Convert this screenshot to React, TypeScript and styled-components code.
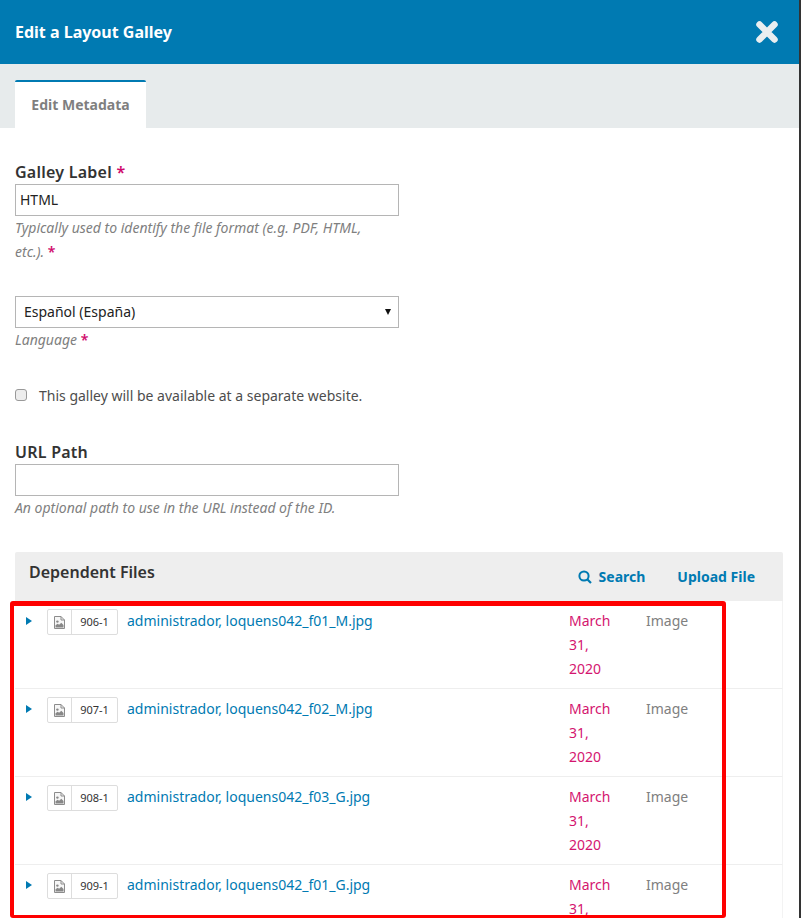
import React from "react";
import styled, { createGlobalStyle } from "styled-components";

const Global = createGlobalStyle`
  html, body { margin: 0; padding: 0; background: #fff; }
  body { width: 801px; height: 918px; overflow: hidden; font-family: "Noto Sans", "Open Sans", sans-serif; }
  * { box-sizing: border-box; }
`;

const Page = styled.div`
  position: relative;
  width: 801px;
  height: 918px;
  overflow: hidden;
  background: #fff;
  display: flex;
`;
const Modal = styled.div`
  width: 799px;
  height: 918px;
  overflow: hidden;
`;
const EdgeBar = styled.div`
  width: 2px;
  height: 918px;
  background: #333;
`;
const Header = styled.header`
  height: 64px;
  background: #007ab2;
  display: flex;
  align-items: center;
  justify-content: space-between;
  padding: 0 20px 0 15px;
`;
const Title = styled.h1`
  margin: 0;
  font-size: 16px;
  font-weight: 700;
  color: #fff;
`;
const TabBar = styled.div`
  height: 64px;
  background: #e7ebec;
  padding: 16px 0 0 15px;
`;
const Tab = styled.div`
  width: 131px;
  height: 48px;
  background: #fff;
  border-top: 2px solid #007ab2;
  border-radius: 2px 2px 0 0;
  font-size: 14px;
  font-weight: 700;
  color: #7f7f7f;
  display: flex;
  align-items: center;
  justify-content: center;
  padding-bottom: 2px;
`;
const Form = styled.div`
  padding: 32px 15px 0;
  display: flex;
  flex-direction: column;
`;
const Label = styled.div`
  font-size: 16px;
  line-height: 24px;
  font-weight: 600;
  color: #333;
  letter-spacing: 0.25px;
`;
const Star = styled.span`
  color: #d00a6c;
  font-style: normal;
  font-weight: 600;
`;
const NoWrap = styled.span`
  white-space: nowrap;
`;
const TextBox = styled.div`
  width: 384px;
  height: 32px;
  border: 1px solid #b5b5b5;
  font-size: 14px;
  line-height: 30px;
  padding: 0 4px;
  color: #222;
`;
const SelectBox = styled(TextBox)`
  display: flex;
  justify-content: space-between;
  align-items: center;
  padding: 0 8px;
`;
const Caret = styled.span`
  width: 0;
  height: 0;
  margin-right: -1px;
  margin-top: -1px;
  border-left: 3px solid transparent;
  border-right: 3px solid transparent;
  border-top: 6px solid #111;
`;
const Hint = styled.div<{ $mb: number }>`
  width: 384px;
  font-size: 14px;
  line-height: 24px;
  font-style: italic;
  color: #808080;
  margin-bottom: ${(p) => p.$mb}px;
`;
const CheckRow = styled.label`
  display: flex;
  align-items: center;
  height: 24px;
  padding-bottom: 2px;
  font-size: 14px;
  color: #4d4d4d;
  margin-bottom: 32px;
`;
const CheckBox = styled.span`
  width: 12px;
  height: 12px;
  margin: -1px 12px 0 0;
  border: 1px solid #999;
  border-radius: 3px;
  background: #ededed;
`;
const Grid = styled.section`
  width: 768px;
`;
const GridHead = styled.div`
  height: 49px;
  background: #eee;
  border-radius: 2px 2px 0 0;
  display: flex;
  align-items: center;
  padding: 0 28px 0 14px;
`;
const GridTitle = styled.h2`
  margin: 0 auto 9px 0;
  font-size: 16px;
  font-weight: 600;
  color: #333;
`;
const Action = styled.a<{ $ml?: number }>`
  display: flex;
  align-items: center;
  gap: 7px;
  margin-left: ${(p) => p.$ml ?? 0}px;
  font-size: 14px;
  font-weight: 700;
  color: #007ab2;
`;
const Row = styled.div`
  height: 88px;
  padding: 8px 0 0 8px;
  display: flex;
  align-items: flex-start;
  border-bottom: 1px solid #eee;
  border-right: 1px solid #f3f3f3;
`;
const Toggle = styled.span`
  width: 0;
  height: 0;
  margin: 8px 15px 0 3px;
  border-top: 4px solid transparent;
  border-bottom: 4px solid transparent;
  border-left: 6px solid #007ab2;
`;
const Badge = styled.span`
  display: flex;
  width: 71px;
  height: 26px;
  border: 1px solid #ddd;
  border-radius: 2px;
  flex: none;
`;
const BadgeIcon = styled.span`
  width: 24px;
  border-right: 1px solid #ddd;
  display: flex;
  align-items: center;
  justify-content: center;
`;
const BadgeId = styled.span`
  flex: 1;
  text-align: center;
  font-size: 11px;
  line-height: 24px;
  color: #333;
`;
const FileLink = styled.a`
  width: 442px;
  margin-left: 9px;
  font-size: 14px;
  line-height: 24px;
  color: #007ab2;
`;
const DateCell = styled.div`
  width: 44px;
  font-size: 14px;
  line-height: 24px;
  color: #d4156f;
  word-spacing: 100px;
`;
const TypeCell = styled.div`
  margin-left: 33px;
  font-size: 14px;
  line-height: 24px;
  color: #808080;
`;
const Highlight = styled.div`
  position: absolute;
  left: 10px;
  top: 601px;
  width: 716px;
  height: 317px;
  border: 4px solid #fe0000;
  border-top-width: 5px;
  border-bottom-width: 3px;
  border-radius: 3px;
  pointer-events: none;
`;

const ImageGlyph = () => (
  <svg width="11" height="13" viewBox="0 0 11 13">
    <path d="M.5.5h6.5l3.5 3.5v8.5H.5z" fill="#f6f6f6" stroke="#8c8c8c" />
    <path d="M7 .5V4h3.5" fill="none" stroke="#8c8c8c" />
    <circle cx="3.4" cy="5.6" r="1.2" fill="#888" />
    <path d="M1.5 11.5V9.2l2.2-1.4 1.4 1 2.2-2 2.2 2.2v2.5z" fill="#888" />
  </svg>
);

const CloseGlyph = () => (
  <svg width="24" height="24" viewBox="0 0 24 24">
    <path d="M4.5 4.5 L19.5 19.5 M19.5 4.5 L4.5 19.5" stroke="#e9eef0" strokeWidth="6.5" strokeLinecap="round" />
  </svg>
);

const SearchGlyph = () => (
  <svg width="14" height="14" viewBox="0 0 14 14" fill="none">
    <circle cx="6" cy="6" r="4.6" stroke="#007ab2" strokeWidth="2" />
    <path d="M9.5 9.5 13 13" stroke="#007ab2" strokeWidth="2.2" />
  </svg>
);

const files = [
  ["906-1", "administrador, loquens042_f01_M.jpg"],
  ["907-1", "administrador, loquens042_f02_M.jpg"],
  ["908-1", "administrador, loquens042_f03_G.jpg"],
  ["909-1", "administrador, loquens042_f01_G.jpg"],
];

export default function App() {
  return (
    <Page>
      <Global />
      <Modal>
        <Header>
          <Title>Edit a Layout Galley</Title>
          <CloseGlyph />
        </Header>
        <TabBar>
          <Tab>Edit Metadata</Tab>
        </TabBar>
        <Form>
          <Label>
            Galley Label <Star>*</Star>
          </Label>
          <TextBox>HTML</TextBox>
          <Hint $mb={32}>
            Typically used to identify the file format (e.g. PDF, HTML,{" "}
            <NoWrap>
              etc.). <Star>*</Star>
            </NoWrap>
          </Hint>
          <SelectBox>
            Español (España)
            <Caret />
          </SelectBox>
          <Hint $mb={32}>
            Language <Star>*</Star>
          </Hint>
          <CheckRow>
            <CheckBox />
            This galley will be available at a separate website.
          </CheckRow>
          <Label>URL Path</Label>
          <TextBox />
          <Hint $mb={32}>An optional path to use in the URL instead of the ID.</Hint>
          <Grid>
            <GridHead>
              <GridTitle>Dependent Files</GridTitle>
              <Action>
                <SearchGlyph />
                Search
              </Action>
              <Action $ml={32}>Upload File</Action>
            </GridHead>
            {files.map(([id, name]) => (
              <Row key={id}>
                <Toggle />
                <Badge>
                  <BadgeIcon>
                    <ImageGlyph />
                  </BadgeIcon>
                  <BadgeId>{id}</BadgeId>
                </Badge>
                <FileLink>{name}</FileLink>
                <DateCell>March 31, 2020</DateCell>
                <TypeCell>Image</TypeCell>
              </Row>
            ))}
          </Grid>
        </Form>
      </Modal>
      <EdgeBar />
      <Highlight />
    </Page>
  );
}
